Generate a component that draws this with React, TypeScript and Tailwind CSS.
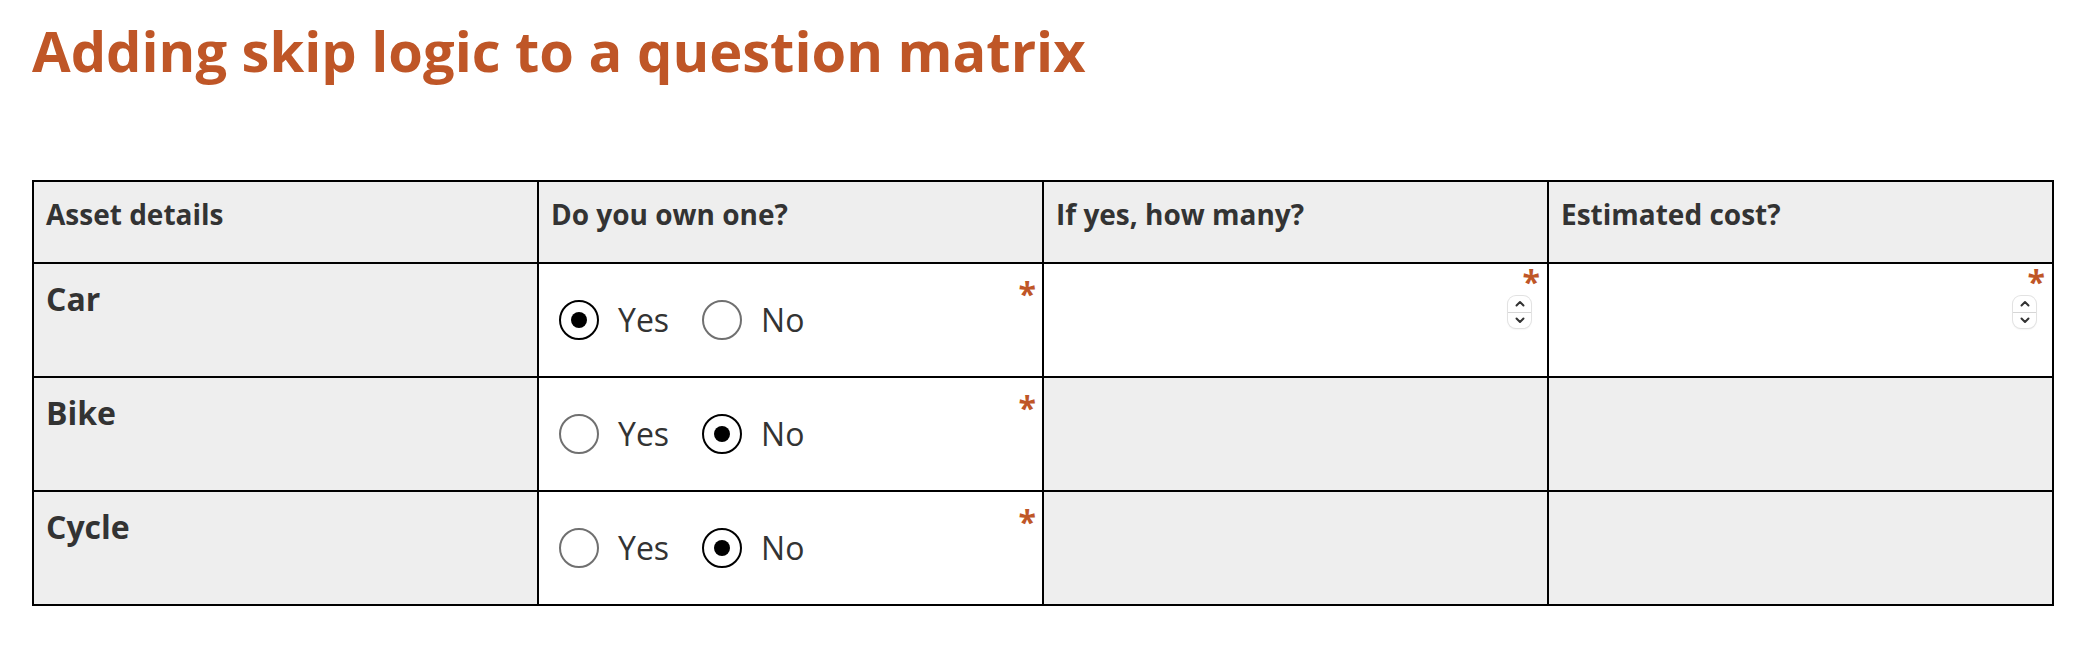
import React from "react";

const assets = [
  { label: "Car", owns: true },
  { label: "Bike", owns: false },
  { label: "Cycle", owns: false },
];

const headers = ["Asset details", "Do you own one?", "If yes, how many?", "Estimated cost?"];

function Radio({ checked }: { checked: boolean }) {
  if (checked) {
    return (
      <span className="flex h-[40px] w-[40px] shrink-0 items-center justify-center rounded-full border-2 border-black bg-white">
        <span className="h-[16px] w-[16px] rounded-full bg-black" />
      </span>
    );
  }
  return <span className="h-[40px] w-[40px] shrink-0 rounded-full border-2 border-[#707070] bg-white" />;
}

function Required({ className }: { className: string }) {
  return <span className={`block text-[32px] font-bold leading-none text-[#bf5627] ${className}`}>*</span>;
}

function Spinner() {
  return (
    <div className="mr-[9px] flex h-[32px] w-[23px] flex-col overflow-hidden rounded-[8px] bg-white shadow-[0_0_0_1px_#e2e2e2,0_1px_2px_rgba(0,0,0,0.12)]">
      <div className="flex flex-1 items-center justify-center border-b border-[#d6d6d6]">
        <svg width="10" height="7" viewBox="0 0 10 7" fill="none">
          <path d="M1.5 5.5 L5 2 L8.5 5.5" stroke="#333" strokeWidth="2" strokeLinecap="round" strokeLinejoin="round" />
        </svg>
      </div>
      <div className="flex flex-1 items-center justify-center">
        <svg width="10" height="7" viewBox="0 0 10 7" fill="none">
          <path d="M1.5 1.5 L5 5 L8.5 1.5" stroke="#333" strokeWidth="2" strokeLinecap="round" strokeLinejoin="round" />
        </svg>
      </div>
    </div>
  );
}

function OwnCell({ owns }: { owns: boolean }) {
  return (
    <div className="flex h-[114px] items-center border-r-2 border-b-2 border-black bg-white pl-[20px] pr-[6px]">
      <div className="flex items-center gap-[33px] text-[32px] text-[#333333]">
        <label className="flex items-center gap-[19px]">
          <Radio checked={owns} />
          <span>Yes</span>
        </label>
        <label className="flex items-center gap-[19px]">
          <Radio checked={!owns} />
          <span>No</span>
        </label>
      </div>
      <Required className="ml-auto mt-[14px] self-start" />
    </div>
  );
}

function NumberCell({ active }: { active: boolean }) {
  if (!active) {
    return <div className="h-[114px] border-r-2 border-b-2 border-black bg-[#eeeeee]" />;
  }
  return (
    <div className="flex h-[114px] flex-col items-end border-r-2 border-b-2 border-black bg-white pr-[7px] pt-[2px]">
      <Required className="h-[30px]" />
      <Spinner />
    </div>
  );
}

export default function App() {
  return (
    <div className="min-h-screen bg-white px-[32px] pt-[17px] font-['Open_Sans',sans-serif] text-[#333333]">
      <h1 className="text-[56px] font-bold leading-[67px] text-[#bf5627]">Adding skip logic to a question matrix</h1>
      <div className="mt-[96px] grid w-[2022px] grid-cols-4 border-t-2 border-l-2 border-black">
        {headers.map((h) => (
          <div key={h} className="h-[82px] border-r-2 border-b-2 border-black bg-[#eeeeee] pl-[12px] pt-[13px] text-[28px] font-bold leading-[39px]">
            {h}
          </div>
        ))}
        {assets.map((a) => (
          <React.Fragment key={a.label}>
            <div className="h-[114px] border-r-2 border-b-2 border-black bg-[#eeeeee] pl-[12px] pt-[14px] text-[32px] font-bold leading-[42px]">
              {a.label}
            </div>
            <OwnCell owns={a.owns} />
            <NumberCell active={a.owns} />
            <NumberCell active={a.owns} />
          </React.Fragment>
        ))}
      </div>
    </div>
  );
}
